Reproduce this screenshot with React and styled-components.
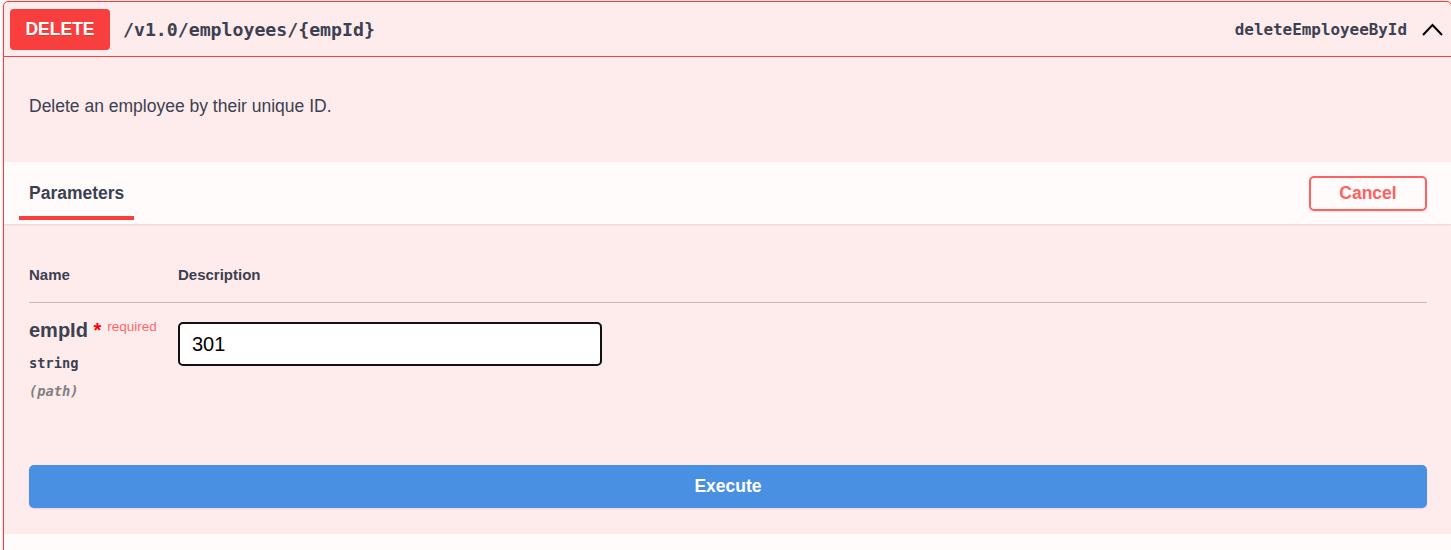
import styled, { createGlobalStyle } from "styled-components";

const GlobalStyle = createGlobalStyle`
  html, body {
    margin: 0;
    padding: 0;
    background: #fff;
    overflow: hidden;
  }
  body {
    font-family: "Liberation Sans", Arial, sans-serif;
    color: #3b4151;
  }
`;

const Page = styled.div`
  padding: 1px 0 0 3px;
`;

const Block = styled.section`
  width: 1447px;
  border: 1px solid #f93e3e;
  border-radius: 5px;
  background: rgba(249, 62, 62, 0.1);
  box-shadow: 0 0 3px rgba(0, 0, 0, 0.19);
`;

const Summary = styled.div`
  display: flex;
  align-items: center;
  height: 54px;
  padding: 0 8px 0 6px;
  border-bottom: 1px solid #f93e3e;
`;

const Method = styled.span`
  display: flex;
  align-items: center;
  justify-content: center;
  width: 100px;
  height: 41px;
  border-radius: 4px;
  background: #f93e3e;
  color: #fff;
  font-size: 17.5px;
  font-weight: 700;
  text-shadow: 0 1px 0 rgba(0, 0, 0, 0.1);
`;

const Path = styled.span`
  flex: 1;
  padding-left: 13px;
  font-family: "DejaVu Sans Mono", monospace;
  font-size: 18.2px;
  font-weight: 600;
  color: #3b4151;
`;

const OperationId = styled.span`
  font-family: "DejaVu Sans Mono", monospace;
  font-size: 15.9px;
  font-weight: 600;
  color: #3b4151;
`;

const Arrow = styled.svg`
  margin-left: 15px;
  display: block;
`;

const Description = styled.div`
  height: 105px;
  box-sizing: border-box;
  padding: 39px 25px 0;
  font-size: 17.5px;
  line-height: 20px;
  color: #3b4151;
`;

const SectionHeader = styled.div`
  display: flex;
  align-items: stretch;
  justify-content: space-between;
  height: 62px;
  box-sizing: border-box;
  padding: 0 24px 0 15px;
  background: rgba(255, 255, 255, 0.8);
  box-shadow: 0 1px 2px rgba(0, 0, 0, 0.1);
`;

const Tab = styled.div`
  display: flex;
  align-items: center;
  padding: 8px 10px 0;
  margin-bottom: 4px;
  border-bottom: 4px solid #f93e3e;
  font-size: 17.5px;
  font-weight: 700;
  color: #3b4151;
`;

const OutlineButton = styled.button`
  align-self: center;
  width: 118px;
  height: 35px;
  border: 2px solid #ff6060;
  border-radius: 5px;
  background: transparent;
  color: #ff6060;
  font-family: "Liberation Sans", Arial, sans-serif;
  font-size: 17.5px;
  font-weight: 700;
  box-shadow: 0 1px 2px rgba(0, 0, 0, 0.1);
  cursor: pointer;
`;

const Table = styled.div`
  padding: 0 24px 0 25px;
`;

const Row = styled.div`
  display: grid;
  grid-template-columns: 149px 1fr;
`;

const HeadRow = styled(Row)`
  padding: 42px 0 19px;
  border-bottom: 1px solid rgba(59, 65, 81, 0.3);
  font-size: 15px;
  line-height: 17px;
  font-weight: 700;
  color: #3b4151;
`;

const ParamRow = styled(Row)`
  padding-top: 16px;
`;

const NameCell = styled.div`
  display: flex;
  flex-direction: column;
`;

const ParamName = styled.div`
  font-size: 20px;
  line-height: 23px;
  font-weight: 700;
  color: #3b4151;
  white-space: nowrap;
`;

const Star = styled.span`
  color: red;
`;

const Required = styled.span`
  position: relative;
  top: -6px;
  padding-left: 6px;
  font-size: 13.5px;
  font-weight: 400;
  color: rgba(255, 0, 0, 0.6);
`;

const ParamType = styled.div`
  margin-top: 10px;
  font-family: "DejaVu Sans Mono", monospace;
  font-size: 13.7px;
  line-height: 18px;
  font-weight: 600;
  color: #3b4151;
`;

const ParamIn = styled.div`
  margin-top: 10px;
  font-family: "DejaVu Sans Mono", monospace;
  font-size: 13.7px;
  line-height: 18px;
  font-weight: 600;
  font-style: italic;
  color: #808080;
`;

const Input = styled.input`
  margin-top: 3px;
  width: 424px;
  height: 44px;
  box-sizing: border-box;
  padding: 0 12px;
  border: 2px solid #111;
  border-radius: 5px;
  background: #fff;
  color: #000;
  font-family: "Liberation Sans", Arial, sans-serif;
  font-size: 20px;
  outline: none;
`;

const ExecuteWrap = styled.div`
  padding: 65px 24px 26px 25px;
`;

const ExecuteButton = styled.button`
  display: block;
  width: 100%;
  height: 43px;
  border: none;
  border-radius: 5px;
  background: #4990e2;
  color: #fff;
  font-family: "Liberation Sans", Arial, sans-serif;
  font-size: 17.5px;
  font-weight: 700;
  box-shadow: 0 1px 2px rgba(0, 0, 0, 0.1);
  cursor: pointer;
`;

const ResponsesHeader = styled.div`
  height: 60px;
  background: rgba(255, 255, 255, 0.8);
  box-shadow: 0 1px 2px rgba(0, 0, 0, 0.1);
`;

function App() {
  return (
    <Page>
      <GlobalStyle />
      <Block>
        <Summary>
          <Method>DELETE</Method>
          <Path>/v1.0/employees/{"{empId}"}</Path>
          <OperationId>deleteEmployeeById</OperationId>
          <Arrow width="21" height="13" viewBox="0 0 21 13">
            <polyline
              points="1,12 10.5,2 20,12"
              fill="none"
              stroke="#000"
              strokeWidth="2"
            />
          </Arrow>
        </Summary>

        <Description>Delete an employee by their unique ID.</Description>

        <SectionHeader>
          <Tab>Parameters</Tab>
          <OutlineButton>Cancel</OutlineButton>
        </SectionHeader>

        <Table>
          <HeadRow>
            <div>Name</div>
            <div>Description</div>
          </HeadRow>
          <ParamRow>
            <NameCell>
              <ParamName>
                empId<Star> *</Star>
                <Required>required</Required>
              </ParamName>
              <ParamType>string</ParamType>
              <ParamIn>(path)</ParamIn>
            </NameCell>
            <div>
              <Input defaultValue="301" />
            </div>
          </ParamRow>
        </Table>

        <ExecuteWrap>
          <ExecuteButton>Execute</ExecuteButton>
        </ExecuteWrap>

        <ResponsesHeader />
      </Block>
    </Page>
  );
}

export default App;
